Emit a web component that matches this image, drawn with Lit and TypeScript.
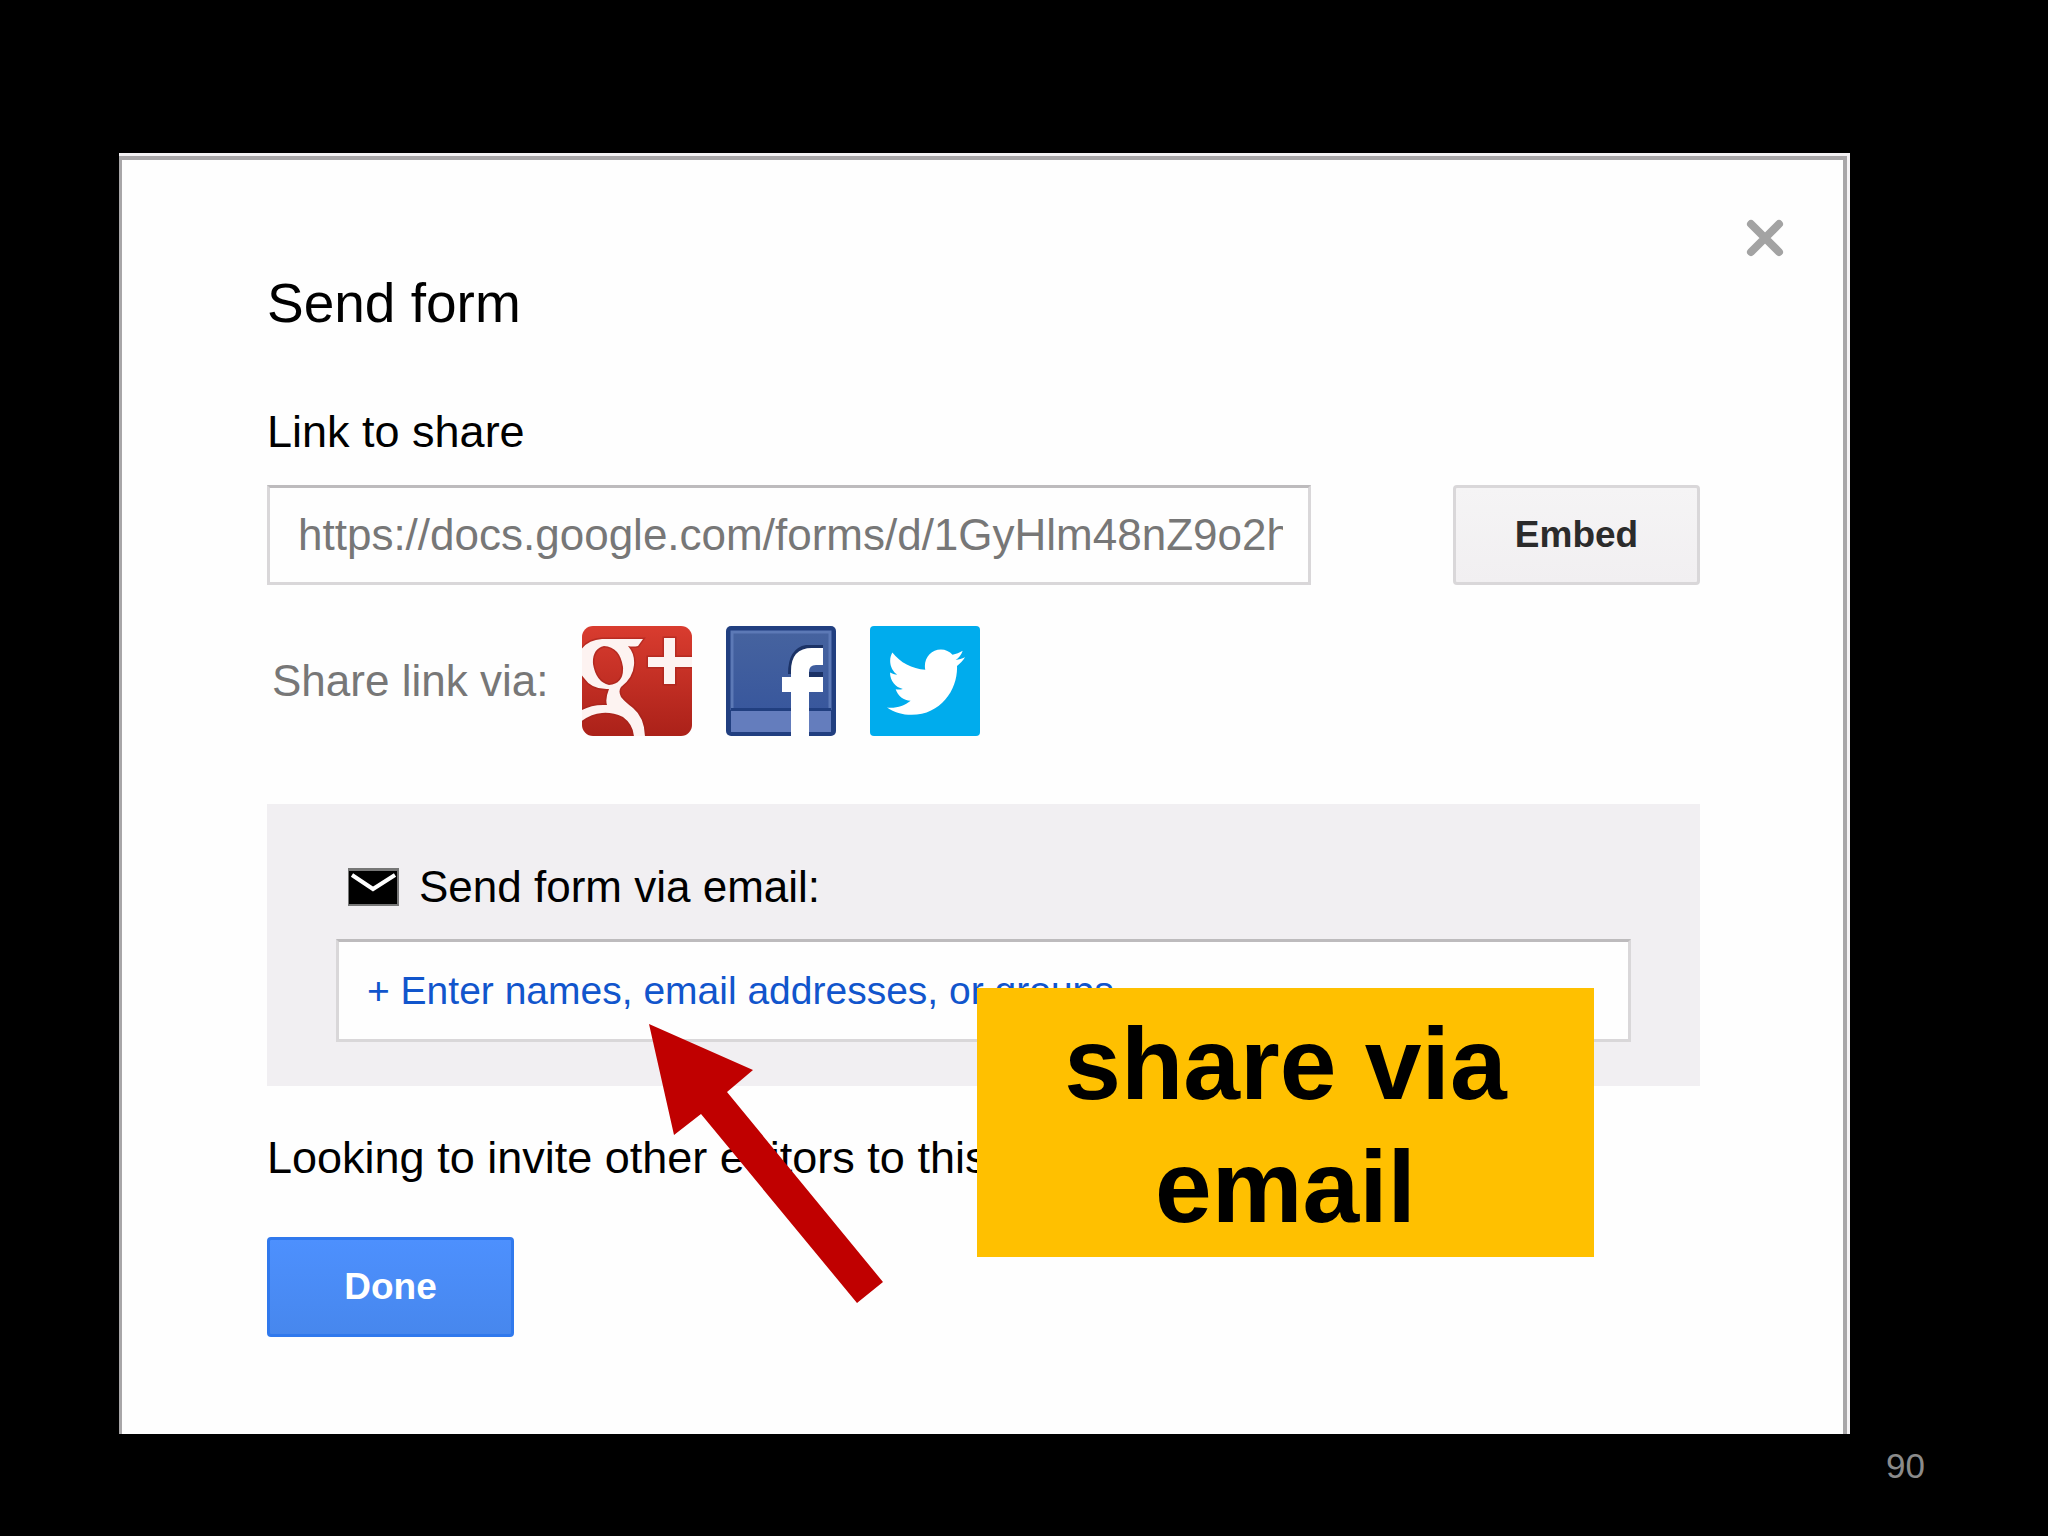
import { LitElement, html, css } from "lit";
import { customElement } from "lit/decorators.js";

@customElement("share-links")
class ShareLinks extends LitElement {
  static styles = css`
    :host {
      display: block;
    }
    .row {
      display: flex;
      align-items: center;
      gap: 34px;
      padding-left: 5px;
      color: #777;
      font-size: 44px;
      line-height: 50px;
    }
    .link {
      display: block;
    }
    .icon {
      display: block;
      width: 110px;
      height: 110px;
    }
  `;

  render() {
    return html`
      <div class="row">
        <span>Share link via:</span>
        <a class="link" href="#" aria-label="Google+">
          <svg class="icon" viewBox="0 0 110 110" aria-hidden="true">
            <defs>
              <linearGradient id="red" x1="0" y1="0" x2="0" y2="1">
                <stop offset="0" stop-color="#d93c2f" />
                <stop offset="1" stop-color="#ab2119" />
              </linearGradient>
              <clipPath id="tile"><rect width="110" height="110" rx="11" /></clipPath>
            </defs>
            <g clip-path="url(#tile)">
              <rect width="110" height="110" fill="url(#red)" />
              <g stroke="#a3231b" stroke-opacity=".55" stroke-width="3" paint-order="stroke" fill="#fdf3f1">
                <path
                  fill-rule="evenodd"
                  d="M61 13 L56 20 Q51 21 46 20 Q53 28 52 39 Q51 52 39 61 Q36 65 39 71 Q43 76 51 82 Q63 92 63 112 H52 Q52 99 41 91 Q30 86 20 87 Q8 88 -3 97 V86 Q8 78 25 79 Q23 73 27 63 Q10 64 2 52 L-3 46 V27 Q4 14 20 13 Z M22 20 Q10 23 11 38 Q14 56 27 59 Q42 58 41 41 Q38 21 22 20 Z"
                />
                <path d="M82 12 H93 V31 H113 V41 H93 V58 H82 V41 H66 V31 H82 Z" />
              </g>
            </g>
          </svg>
        </a>
        <a class="link" href="#" aria-label="Facebook">
          <svg class="icon" viewBox="0 0 110 110" aria-hidden="true">
            <defs>
              <linearGradient id="blue" x1="0" y1="0" x2="0" y2="1">
                <stop offset="0" stop-color="#46639f" />
                <stop offset="1" stop-color="#35549c" />
              </linearGradient>
            </defs>
            <rect width="110" height="110" rx="5" fill="#213f80" />
            <rect x="5" y="5" width="100" height="100" fill="url(#blue)" />
            <path d="M6 84 V6 H104 V84" fill="none" stroke="#5c79b6" stroke-width="3" />
            <rect x="5" y="82" width="100" height="3" fill="#213f80" />
            <rect x="5" y="85" width="100" height="21" fill="#647dbd" />
            <path d="M62 48 Q62 22 80 19 H97 V22 H84 L68 48 Z M83 46 H97 V51 H83 Z" fill="#1b3266" />
            <path
              d="M65 110 V66 H56 V51 H65 V45 Q65 22 86 22 H97 V39 H90 Q83 39 83 46 V51 H97 V66 H83 V110 Z"
              fill="#fff"
            />
          </svg>
        </a>
        <a class="link" href="#" aria-label="Twitter">
          <svg class="icon" viewBox="0 0 110 110" aria-hidden="true">
            <rect width="110" height="110" rx="4" fill="#00aced" />
            <path
              transform="translate(17 16) scale(3.25 3.35)"
              fill="#fff"
              d="M23.954 4.569c-.885.389-1.83.654-2.825.775 1.014-.611 1.794-1.574 2.163-2.723-.951.555-2.005.959-3.127 1.184-.896-.959-2.173-1.559-3.591-1.559-2.717 0-4.92 2.203-4.92 4.917 0 .39.045.765.127 1.124C7.691 8.094 4.066 6.13 1.64 3.161c-.427.722-.666 1.561-.666 2.475 0 1.71.87 3.213 2.188 4.096-.807-.026-1.566-.248-2.228-.616v.061c0 2.385 1.693 4.374 3.946 4.827-.413.111-.849.171-1.296.171-.314 0-.615-.03-.916-.086.631 1.953 2.445 3.377 4.604 3.417-1.68 1.319-3.809 2.105-6.102 2.105-.39 0-.779-.023-1.17-.067 2.189 1.394 4.768 2.209 7.557 2.209 9.054 0 13.999-7.496 13.999-13.986 0-.209 0-.42-.015-.63.961-.689 1.8-1.56 2.46-2.548l-.047-.02z"
            />
          </svg>
        </a>
      </div>
    `;
  }
}

@customElement("app-root")
class AppRoot extends LitElement {
  static styles = css`
    :host {
      display: block;
      font-family: "Liberation Sans", Arial, sans-serif;
    }
    * {
      box-sizing: border-box;
    }
    .slide {
      min-height: 100vh;
      padding: 153px 0 0;
      background: #000;
    }
    .frame {
      position: relative;
      margin: 0 198px 0 119px;
      padding: 3px 3px 0 0;
      background: #f4f2f4;
    }
    .dialog {
      display: flex;
      flex-direction: column;
      padding: 111px 143px 97px 145px;
      border: solid #a8a6a8;
      border-width: 4px 4px 0 3px;
      background: #fefefe;
      color: #000;
      font-size: 45px;
      line-height: 50px;
    }
    .title {
      margin: 0 0 72px;
      font-size: 55px;
      font-weight: 400;
      line-height: 64px;
    }
    .close {
      position: absolute;
      top: 66px;
      right: 66px;
      padding: 0;
      border: 0;
      background: none;
    }
    .cross {
      display: block;
      width: 38px;
      height: 38px;
    }
    .link-row {
      display: flex;
      gap: 142px;
      margin: 28px 0 41px;
    }
    .field {
      min-width: 0;
      margin: 0;
      padding: 0 25px 0 28px;
      border: 3px solid #d9d7d9;
      border-top-color: #bdbbbd;
      border-radius: 0;
      background: #fefefe;
      font-family: inherit;
      outline: none;
    }
    .url {
      flex: 1;
      height: 100px;
      color: #777;
      font-size: 44px;
    }
    .button {
      width: 247px;
      height: 100px;
      padding: 0;
      border: 3px solid #d9d7d9;
      border-radius: 4px;
      background: linear-gradient(#f5f4f5, #f1eff1);
      color: #2b2b2b;
      font-family: inherit;
      font-size: 37px;
      font-weight: 700;
    }
    .primary {
      border-color: #3079ed;
      background: linear-gradient(#4d90fe, #4787ed);
      color: #fff;
    }
    .email {
      display: flex;
      flex-direction: column;
      gap: 27px;
      margin: 68px 0 47px;
      padding: 58px 69px 44px;
      background: #f1eff2;
    }
    .email-label {
      display: flex;
      align-items: center;
      gap: 20px;
      padding-left: 12px;
      font-size: 44px;
    }
    .envelope {
      width: 51px;
      height: 38px;
    }
    .names {
      width: 100%;
      height: 103px;
      color: #1155cc;
      font-size: 39px;
    }
    .names::placeholder {
      color: #1155cc;
      opacity: 1;
    }
    .invite {
      margin: 0 0 54px;
    }
    .arrow {
      position: absolute;
      left: 530px;
      top: 871px;
      width: 234px;
      height: 279px;
    }
    .callout {
      position: absolute;
      left: 858px;
      top: 835px;
      width: 617px;
      padding: 15px 60px 8px;
      background: #ffc000;
      color: #000;
      font-size: 102px;
      font-weight: 700;
      line-height: 123px;
      text-align: center;
    }
    .footer {
      padding: 12px 123px 0 0;
      color: #8b8b8b;
      font-size: 35px;
      line-height: 40px;
      text-align: right;
    }
  `;

  render() {
    return html`
      <div class="slide">
        <main class="frame">
          <section class="dialog" role="dialog" aria-labelledby="title">
            <h1 class="title" id="title">Send form</h1>
            <label for="url">Link to share</label>
            <div class="link-row">
              <input
                class="field url"
                id="url"
                type="text"
                readonly
                value="https://docs.google.com/forms/d/1GyHlm48nZ9o2h"
              />
              <button class="button" type="button">Embed</button>
            </div>
            <share-links></share-links>
            <div class="email">
              <label class="email-label" for="names">
                <svg class="envelope" viewBox="0 0 51 38" aria-hidden="true">
                  <rect width="51" height="38" fill="#777" />
                  <rect x="1" y="3" width="48" height="33" fill="#000" />
                  <path d="M4 7 L25 21 L47 7" fill="none" stroke="#fff" stroke-width="4" />
                </svg>
                Send form via email:
              </label>
              <input
                class="field names"
                id="names"
                type="text"
                placeholder="+ Enter names, email addresses, or groups"
              />
            </div>
            <p class="invite">Looking to invite other editors to this</p>
            <button class="button primary" type="button">Done</button>
          </section>
          <button class="close" type="button" aria-label="Close">
            <svg class="cross" viewBox="0 0 38 38" aria-hidden="true">
              <path d="M5 5 L33 33 M33 5 L5 33" stroke="#a3a3a3" stroke-width="8" stroke-linecap="round" />
            </svg>
          </button>
          <svg class="arrow" viewBox="0 0 234 279" aria-hidden="true">
            <path d="M0 0 L104 46 L78 68 L234 258 L208 279 L52 90 L25 111 Z" fill="#c00000" />
          </svg>
          <div class="callout">share via email</div>
        </main>
        <footer class="footer">90</footer>
      </div>
    `;
  }
}
